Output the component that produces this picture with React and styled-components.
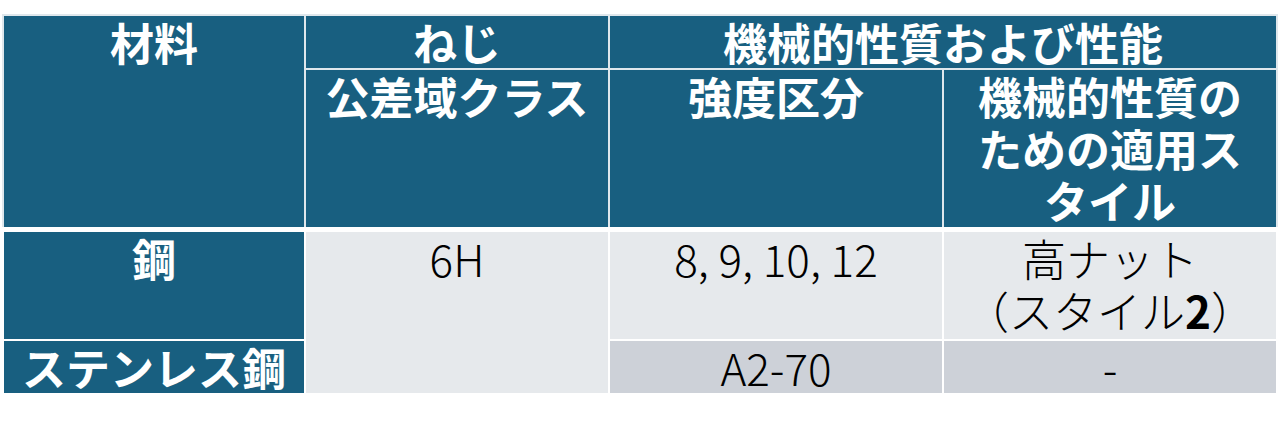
import styled, { createGlobalStyle } from 'styled-components';

const GlobalStyle = createGlobalStyle`
   html, body {
      margin: 0;
      padding: 0;
      background: #ffffff;
   }
   body {
      font-family: 'Noto Sans CJK JP', 'Noto Sans', sans-serif;
   }
`;

const Page = styled.div`
   padding: 14px 4px 0 2px;
`;

const Table = styled.table`
   width: 1274px;
   table-layout: fixed;
   border-collapse: collapse;
   font-size: 44px;
   line-height: 52px;
`;

const HeadCell = styled.th`
   background: #185f80;
   color: #ffffff;
   font-weight: 700;
   text-align: center;
   vertical-align: ${(p) => (p.$middle ? 'middle' : 'top')};
   padding: 0;
   border: 2px solid #dfe7ec;
   border-bottom: ${(p) => (p.$last ? '5px solid #ffffff' : '2px solid #dfe7ec')};
   height: ${(p) => p.$h}px;
`;

const BodyCell = styled.td`
   background: ${(p) => (p.$shade ? '#cdd1d8' : '#e6e9ec')};
   color: #000000;
   font-weight: 300;
   text-align: center;
   vertical-align: ${(p) => (p.$middle ? 'middle' : 'top')};
   padding: 0;
   border: 2px solid #ffffff;
   height: ${(p) => p.$h}px;

   b {
      font-weight: 700;
   }
`;

const SideCell = styled(BodyCell).attrs({ as: 'th' })`
   background: #185f80;
   color: #ffffff;
   font-weight: 700;
`;

const App = () => {
   return (
      <Page>
         <GlobalStyle />
         <Table>
            <colgroup>
               <col style={{ width: 302 }} />
               <col style={{ width: 304 }} />
               <col style={{ width: 334 }} />
               <col style={{ width: 334 }} />
            </colgroup>
            <thead>
               <tr>
                  <HeadCell rowSpan={2} $last>材料</HeadCell>
                  <HeadCell $h={51} $middle>ねじ</HeadCell>
                  <HeadCell colSpan={2} $h={51} $middle>
                     機械的性質および性能
                  </HeadCell>
               </tr>
               <tr>
                  <HeadCell $h={157} $last>公差域クラス</HeadCell>
                  <HeadCell $h={157} $last>強度区分</HeadCell>
                  <HeadCell $h={157} $last>
                     機械的性質の
                     <br />
                     ための適用ス
                     <br />
                     タイル
                  </HeadCell>
               </tr>
            </thead>
            <tbody>
               <tr>
                  <SideCell $h={107}>鋼</SideCell>
                  <BodyCell rowSpan={2}>6H</BodyCell>
                  <BodyCell $h={107}>8, 9, 10, 12</BodyCell>
                  <BodyCell $h={107}>
                     高ナット
                     <br />
                     （スタイル<b>2</b>）
                  </BodyCell>
               </tr>
               <tr>
                  <SideCell $h={52} $middle>ステンレス鋼</SideCell>
                  <BodyCell $h={52} $shade $middle>A2-70</BodyCell>
                  <BodyCell $h={52} $shade $middle>-</BodyCell>
               </tr>
            </tbody>
         </Table>
      </Page>
   );
};

export default App;
